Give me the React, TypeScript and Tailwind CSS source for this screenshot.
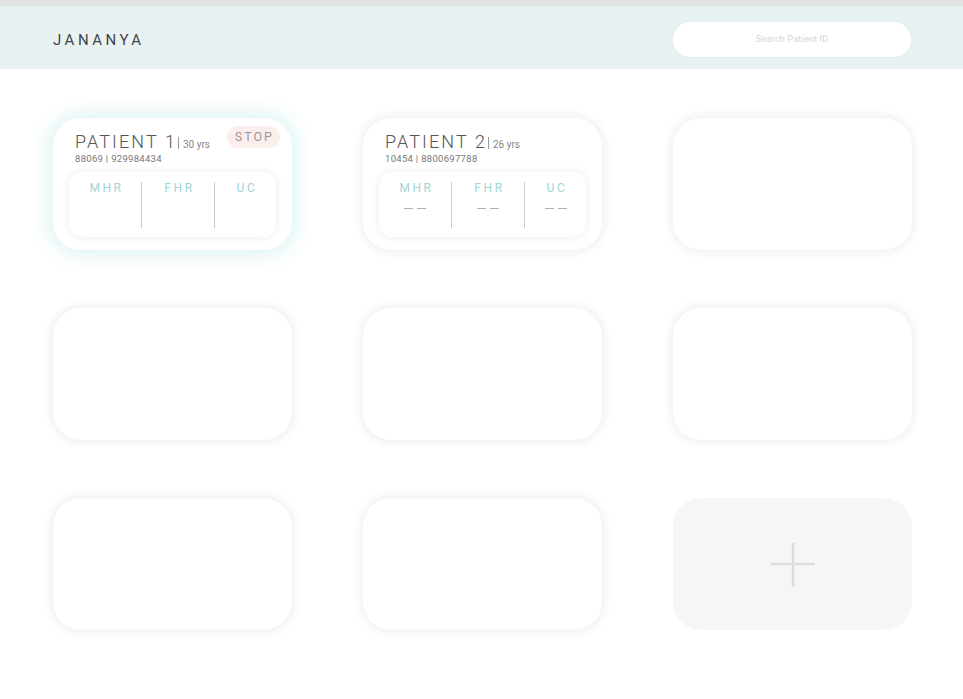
const font = { fontFamily: "Roboto, 'Liberation Sans', sans-serif" };

function Stat(props: { label: string; dash?: boolean; last?: boolean }) {
  return (
    <div
      className={`flex flex-col items-center ${props.last ? "flex-1" : "w-[72px]"}`}
    >
      <span className="text-[12px] leading-[14px] tracking-[2.6px] text-[#9fd5d5] mt-[9px] pl-[3px]">
        {props.label}
      </span>
      {props.dash && (
        <div className="mt-[13px] flex gap-[4px]">
          <span className="h-px w-[9px] bg-[#b0b0b0]" />
          <span className="h-px w-[9px] bg-[#b0b0b0]" />
        </div>
      )}
    </div>
  );
}

function PatientCard(props: {
  name: string;
  age: string;
  info: string;
  active?: boolean;
  empty?: boolean;
}) {
  return (
    <div
      className={`h-[132px] rounded-[28px] bg-white px-[16px] pt-[14px] ${
        props.active
          ? "shadow-[0_0_18px_5px_rgba(175,228,228,0.4)]"
          : "shadow-[0_0_8px_3px_rgba(0,0,0,0.06)]"
      }`}
    >
      <div className="flex items-start justify-between pl-[6px]">
        <div>
          <div className="flex items-end">
            <span className="text-[18px] leading-[20px] tracking-[2.1px] font-light text-[#555555]">
              {props.name}
            </span>
            <span className="ml-[1px] mb-[3px] h-[12px] w-px bg-[#999999]" />
            <span className="ml-[4px] text-[10px] leading-[14px] text-[#888888]">
              {props.age}
            </span>
          </div>
          <div className="text-[9.5px] leading-[12px] tracking-[0.3px] text-[#777777] mt-[1px]">
            {props.info}
          </div>
        </div>
        {props.active && (
          <div className="-mt-[6px] -mr-[4px] rounded-full bg-[#fdeeee] pl-[8px] pr-[6px] py-[3px] text-[12.5px] leading-[16px] tracking-[2px] text-[#999999]">
            STOP
          </div>
        )}
      </div>
      <div className="mt-[7px] flex h-[65px] rounded-[13px] bg-white shadow-[0_0_6px_2px_rgba(0,0,0,0.05)]">
        <Stat label="MHR" dash={props.empty} />
        <div className="mt-[10px] h-[46px] w-px bg-[#cccccc]" />
        <Stat label="FHR" dash={props.empty} />
        <div className="mt-[10px] h-[46px] w-px bg-[#cccccc]" />
        <Stat label="UC" dash={props.empty} last />
      </div>
    </div>
  );
}

function EmptyCard() {
  return (
    <div className="h-[132px] rounded-[28px] bg-white shadow-[0_0_8px_3px_rgba(0,0,0,0.06)]" />
  );
}

function AddCard() {
  return (
    <div className="flex h-[132px] items-center justify-center rounded-[28px] bg-[#f6f6f6]">
      <svg width="46" height="46" viewBox="0 0 46 46" className="mt-[2px]">
        <line x1="23" y1="1" x2="23" y2="45" stroke="#dddddd" strokeWidth="2.5" />
        <line x1="1" y1="22" x2="45" y2="22" stroke="#dddddd" strokeWidth="2.5" />
      </svg>
    </div>
  );
}

export default function App() {
  return (
    <div className="min-h-[699px] w-full bg-white" style={font}>
      {/* top strip */}
      <div className="h-[6px] bg-[#e3e3e3]" />
      {/* header */}
      <div className="flex h-[63px] items-center justify-between bg-[#e9f2f3] pl-[53px] pr-[52px] pt-[4px]">
        <span className="text-[15px] tracking-[3.5px] text-[#444444] mt-[2px]">JANANYA</span>
        <div className="flex h-[35px] w-[238px] items-center justify-center rounded-full bg-white shadow-[0_0_4px_rgba(0,0,0,0.04)]">
          <span className="text-[9.5px] text-[#d6d6d6]">Search Patient ID</span>
        </div>
      </div>
      {/* grid */}
      <div className="grid grid-cols-[239px_239px_239px] gap-x-[71px] gap-y-[58px] pl-[53px] pt-[49px]">
        <PatientCard name="PATIENT 1" age="30 yrs" info="88069 | 929984434" active />
        <PatientCard name="PATIENT 2" age="26 yrs" info="10454 | 8800697788" empty />
        <EmptyCard />
        <EmptyCard />
        <EmptyCard />
        <EmptyCard />
        <EmptyCard />
        <EmptyCard />
        <AddCard />
      </div>
    </div>
  );
}
